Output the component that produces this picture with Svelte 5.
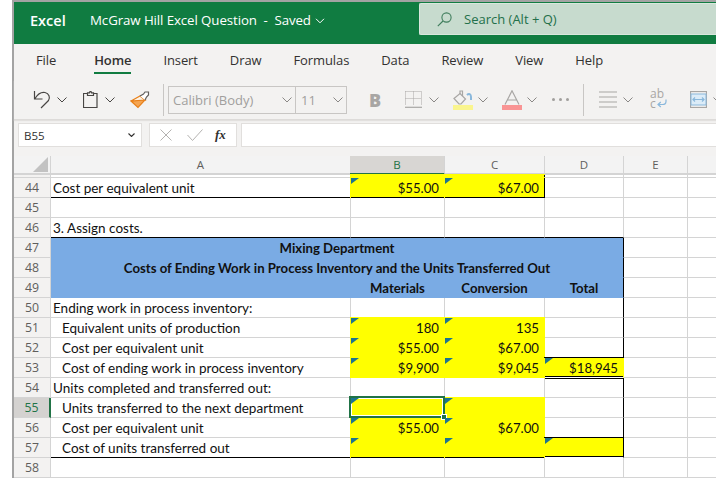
<script>
  const rows = [
    { n: 44, cls: 'line', a: 'Cost per equivalent unit', b: '$55.00', c: '$67.00', by: 1, cy: 1, cbox: 1 },
    { n: 45 },
    { n: 46, a: '3. Assign costs.', cls: 'line', dline: 1 },
    { n: 47, merged: 'Mixing Department' },
    { n: 48, merged: 'Costs of Ending Work in Process Inventory and the Units Transferred Out' },
    { n: 49, blue: 1, b: 'Materials', c: 'Conversion', d: 'Total' },
    { n: 50, a: 'Ending work in process inventory:', dr: 1 },
    { n: 51, a: 'Equivalent units of production', ind: 1, b: '180', c: '135', by: 1, cy: 1, dr: 1 },
    { n: 52, a: 'Cost per equivalent unit', ind: 1, b: '$55.00', c: '$67.00', by: 1, cy: 1, dr: 1, dline: 1 },
    { n: 53, a: 'Cost of ending work in process inventory', ind: 1, b: '$9,900', c: '$9,045', by: 1, cy: 1, d: '$18,945', dy: 1 },
    { n: 54, a: 'Units completed and transferred out:', dr: 1, dtop: 1 },
    { n: 55, a: 'Units transferred to the next department', ind: 1, by: 1, cy: 1, dr: 1, sel: 1 },
    { n: 56, a: 'Cost per equivalent unit', ind: 1, b: '$55.00', c: '$67.00', by: 1, cy: 1, dr: 1, dline: 1 },
    { n: 57, a: 'Cost of units transferred out', ind: 1, by: 1, cy: 1, cls: 'line', dy: 1, dbox: 1 },
    { n: 58 }
  ];
  const tabs = ['File', 'Home', 'Insert', 'Draw', 'Formulas', 'Data', 'Review', 'View', 'Help'];
</script>

{#snippet chev(cls)}
  <svg class="chev {cls}" viewBox="0 0 10 6"><path d="M.5.5 5 5 9.5.5" /></svg>
{/snippet}

<div class="page">
  <div class="frame">
    <header class="title">
      <b class="brand">Excel</b>
      <span class="doc">McGraw Hill Excel Question&nbsp; - &nbsp;Saved</span>
      <svg class="title-chev" viewBox="0 0 10 6"><path d="M1 .8 5 4.8 9 .8" /></svg>
      <div class="search">
        <svg class="glass" viewBox="0 0 15 15"><circle cx="9.5" cy="5.5" r="4.6" /><path d="M6 9 .8 14.2" /></svg>
        <span>Search (Alt + Q)</span>
      </div>
    </header>

    <nav class="tabs">
      {#each tabs as t}
        <span class="tab" class:on={t === 'Home'}>{t}</span>
      {/each}
    </nav>

    <div class="tools">
      <svg class="undo" viewBox="0 0 18 19"><path class="dk" d="M1.5 1v8h8M2 8.500C4.500 4.500 8 1.700 12 2.500c4 .8 5.500 5 3.500 8L8 18" /></svg>
      {@render chev('c1')}
      <svg class="clip" viewBox="0 0 15 17"><path class="dk" d="M4 2.500H.5v14h13.500v-14H10.500M4.500 4.500V1.800H6.500L7 .5h1l.5 1.300h2v2.700z" /></svg>
      {@render chev('c2')}
      <svg class="paint" viewBox="0 0 20 18">
        <path class="wedge" d="M1 10 15 9 8 16.500z" />
        <path class="head" d="M1 10 10 5 15 9z" />
        <path class="handle" d="M10 5 13.500 3 15 1 18.500 1 18.500 4 16.500 6 15 9" />
      </svg>
      <i class="sep s1"></i>
      <div class="box font"><span>Calibri (Body)</span>{@render chev('inbox')}</div>
      <div class="box size"><span>11</span>{@render chev('inbox')}</div>
      <b class="bold">B</b>
      <svg class="borders" viewBox="0 0 17 17"><path class="dots" d="M.5.500H16.500V14M.5.500V14M8.500.500V14M.5 7.500H16.500" /><path class="lt" d="M0 16.300H17" /></svg>
      {@render chev('c3')}
      <div class="color fill">
        <svg viewBox="0 0 20 15"><path class="lt" d="M1 8.500 7 3.500 12.500 9 8 14H6z" /><path class="lt" d="M7 4V1h2.500v5" /><path class="blueline thick" d="M14 5c2-2 4-1 4 2v3" /></svg>
        <i class="bar yl"></i>
      </div>
      {@render chev('c4')}
      <div class="color txt">
        <svg viewBox="0 0 20 15"><path class="lt" d="M3 14.500 10 .8 17 14.500M5.500 10H14.500" /></svg>
        <i class="bar rd"></i>
      </div>
      {@render chev('c4')}
      <span class="dots3"><i></i><i></i><i></i></span>
      <i class="sep s2"></i>
      <svg class="align" viewBox="0 0 18 17"><path class="lt" d="M0 1H18M0 6H18M0 11H18M0 16H18" /></svg>
      {@render chev('c5')}
      <div class="wrap">
        <span class="ab">ab</span><span class="cc">c</span>
        <svg viewBox="0 0 10 9"><path class="blueline" d="M9 .5V2.500C9 5 7.500 5.500 5.500 5.500H1.500M3.800 3 1 5.500 3.800 8" /></svg>
      </div>
      <svg class="merge" viewBox="0 0 17 17">
        <rect x=".5" y=".5" width="16" height="16" class="lt" />
        <rect class="mfill" x="1" y="3" width="15" height="11" />
        <path class="blueline" d="M3 8.500H14M5 6.500 3 8.500 5 10.500M12 6.500 14 8.500 12 10.500" />
      </svg>
      {@render chev('c6')}
    </div>

    <div class="formula">
      <div class="namebox"><span>B55</span><svg class="mini" viewBox="0 0 7 4"><path d="M.5.500 3.500 3.500 6.500.500" /></svg></div>
      <div class="fxbox">
        <svg class="x" viewBox="0 0 12 12"><path d="M.5.500 11.500 11.500M11.500.500.500 11.500" /></svg>
        <svg class="v" viewBox="0 0 16 12"><path d="M.5 6 5.500 11.500 15.500.500" /></svg>
        <i class="fx">fx</i>
      </div>
      <div class="input"></div>
    </div>

    <div class="sheet">
      <div class="row head">
        <div class="corner"><i></i></div>
        <div class="col">A</div>
        <div class="col colsel">B</div>
        <div class="col">C</div>
        <div class="col">D</div>
        <div class="col">E</div>
        <div class="col last"></div>
      </div>
      <div class="row partial">
        <div class="rh"></div>
        <div class="c"></div>
        <div class="c y"></div>
        <div class="c y cbox"></div>
        <div class="c"></div>
        <div class="c"></div>
        <div class="c last"></div>
      </div>
      {#each rows as r}
        <div class="row">
          <div class="rh" class:rsel={r.sel}>{r.n}</div>
          {#if r.merged}
            <div class="c blue span">{r.merged}</div>
          {:else if r.blue}
            <div class="c blue"></div>
            <div class="c blue ctr">{r.b}</div>
            <div class="c blue ctr">{r.c}</div>
            <div class="c blue ctr edge">{r.d}</div>
          {:else}
            <div class="c txt-a" class:ind={r.ind} class:bl={r.cls === 'line'}>{r.a ?? ''}</div>
            <div class="c num" class:y={r.by} class:bl={r.cls === 'line'}>
              {#if r.by}<i class="mark"></i>{/if}{r.b ?? ''}
              {#if r.sel}<i class="cursor"><i class="grip"></i></i>{/if}
            </div>
            <div class="c num" class:y={r.cy} class:bl={r.cls === 'line'} class:cbox={r.cbox}>
              {#if r.cy}<i class="mark"></i>{/if}{r.c ?? ''}
            </div>
            <div class="c num" class:y={r.dy} class:dr={r.dr} class:bl={r.dline} class:dbl={r.dy} class:dtop={r.dtop} class:edge={r.dbox}>
              {#if r.dy}<i class="mark"></i>{/if}{r.d ?? ''}
            </div>
          {/if}
          <div class="c"></div>
          <div class="c last"></div>
        </div>
      {/each}
    </div>
  </div>
</div>

<style>
  :global(body) { margin: 0; background: #fff; }
  .page { width: 716px; height: 478px; overflow: hidden; padding-left: 12px; box-sizing: border-box; background: #fff; }
  .frame { height: 478px; border-left: 2px solid #a3a3a3; border-top: 2px solid #a3a3a3; box-sizing: border-box; background: #f3f2f1; display: flex; flex-direction: column; font-family: "Open Sans", sans-serif; }

  .title { height: 42px; flex: none; background: #107c41; color: #fff; display: flex; align-items: center; }
  .brand { font-size: 14.500px; font-weight: 600; margin-left: 16px; width: 60px; position: relative; top: -3px; }
  .doc { font-size: 13.300px; position: relative; top: -3px; white-space: nowrap; letter-spacing: -.1px; }
  .title-chev { width: 10px; height: 6px; margin-left: 4px; position: relative; top: -2px; }
  .title-chev path { fill: none; stroke: #fff; stroke-width: 1; }
  .search { margin-left: auto; width: 297px; height: 32px; margin-bottom: 8px; box-sizing: border-box; background: #c7dbce; border: 1px solid #d9e7dd; border-right: 0; border-radius: 2px 0 0 2px; display: flex; align-items: center; color: #23704a; font-size: 13px; }
  .glass { width: 15px; height: 15px; margin-left: 17px; margin-right: 12px; }
  .glass circle, .glass path { fill: none; stroke: #3f7d5c; stroke-width: 1.100; }

  .tabs { height: 36px; flex: none; display: flex; gap: 32px; padding-left: 22px; padding-bottom: 4px; box-sizing: border-box; align-items: center; font-size: 13px; color: #323130; letter-spacing: -.1px; }
  .tab { position: relative; line-height: 20px; }
  .tab:first-child { margin-right: 6px; }
  .tab.on { font-weight: 600; }
  .tab.on::after { content: ""; position: absolute; left: 0; right: 0; bottom: -4px; height: 2.500px; background: #107c41; }

  .tools { height: 40px; flex: none; box-sizing: border-box; border-bottom: 1px solid #dddbd9; box-shadow: 0 1px 1px #e2e0de; display: flex; align-items: center; }
  .dk { stroke: #484644; stroke-width: 1.200; fill: none; }
  .lt { stroke: #a8a6a4; stroke-width: 1.200; fill: none; }
  .dots { stroke: #a8a6a4; stroke-width: 1; stroke-dasharray: 1 1; fill: none; }
  .blueline { stroke: #8ab8dc; stroke-width: 1.200; fill: none; }
  .thick { stroke-width: 2; }
  .mfill { fill: #dcecf8; stroke: #8ab8dc; }
  .wedge { fill: #f5a552; stroke: #e8801a; stroke-width: 1.200; }
  .head { fill: #fdf3e6; stroke: #e8801a; stroke-width: 1.200; }
  .handle { fill: #fff; stroke: #605e5c; stroke-width: 1.200; }
  .chev { width: 10px; height: 6px; flex: none; margin-left: 6px; }
  .chev path { stroke: #8a8886; stroke-width: 1; fill: none; }
  .c1 path, .c2 path { stroke: #484644; }
  .undo { width: 18px; height: 19px; margin-left: 19px; flex: none; }
  .clip { width: 15px; height: 17px; margin-left: 16px; flex: none; }
  .c2 { margin-left: 7px; }
  .paint { width: 20px; height: 18px; margin-left: 15px; flex: none; }
  .sep { width: 1px; height: 32px; background: #c8c6c4; flex: none; }
  .s1 { margin-left: 13px; }
  .box { height: 28px; box-sizing: border-box; border: 1px solid #c8c6c4; display: flex; align-items: center; justify-content: space-between; color: #a19f9d; font-size: 13px; flex: none; }
  .font { width: 128px; margin-left: 4px; padding-left: 4px; }
  .size { width: 52px; margin-left: -1px; padding-left: 5px; }
  .chev.inbox { margin-right: 3px; }
  .bold { font-size: 18px; color: #a8a6a4; margin-left: 22px; width: 12px; font-weight: 800; flex: none; }
  .borders { width: 17px; height: 17px; margin-left: 24px; flex: none; }
  .c3 { margin-left: 7px; }
  .color { width: 20px; flex: none; margin-left: 14px; display: flex; flex-direction: column; align-items: center; }
  .color svg { width: 20px; height: 15px; }
  .bar { width: 20px; height: 5px; display: block; }
  .yl { background: #faf58e; }
  .rd { background: #f99494; }
  .chev.c4 { margin-left: 5px; }
  .dots3 { display: flex; gap: 4px; margin-left: 15px; flex: none; }
  .dots3 i { width: 3px; height: 3px; border-radius: 50%; background: #a19f9d; }
  .s2 { margin-left: 14px; }
  .align { width: 18px; height: 17px; margin-left: 15px; flex: none; }
  .wrap { position: relative; width: 18px; height: 19px; margin-left: 17px; flex: none; color: #a8a6a4; font-size: 12px; line-height: 10px; }
  .ab { position: absolute; left: 0; top: -1px; }
  .cc { position: absolute; left: 0; top: 9px; }
  .wrap svg { position: absolute; left: 7px; top: 9px; width: 10px; height: 9px; }
  .merge { width: 17px; height: 17px; margin-left: 22px; flex: none; }

  .formula { height: 28px; flex: none; display: flex; margin-top: 3px; }
  .namebox { width: 124px; height: 24px; margin-left: 4px; box-sizing: border-box; background: #fff; border: 1px solid #e1dfdd; display: flex; align-items: center; justify-content: space-between; padding: 0 6px 0 5px; font-size: 11.500px; color: #323130; flex: none; }
  .mini { width: 7px; height: 4px; }
  .mini path { fill: none; stroke: #323130; stroke-width: 1.100; }
  .fxbox { width: 88px; height: 24px; margin-left: 7px; box-sizing: border-box; background: #fff; border: 1px solid #e1dfdd; display: flex; align-items: center; padding-left: 10px; flex: none; }
  .x { width: 12px; height: 12px; }
  .v { width: 16px; height: 12px; margin-left: 15px; }
  .x path, .v path { fill: none; stroke: #b4b2b0; stroke-width: 1; }
  .fx { font-family: "Liberation Serif", serif; font-size: 13px; margin-left: 12px; color: #323130; font-weight: 700; }
  .input { flex: 1; height: 24px; margin-left: 4px; box-sizing: border-box; background: #fff; border: 1px solid #e1dfdd; border-right: 0; }

  .sheet { flex: 1; margin-top: 5px; background: #fff; font-family: Lato, sans-serif; font-size: 13.200px; color: #111; }
  .row { display: grid; grid-template-columns: 37px 300px 94px 100px 79px 64px 1fr; height: 20px; }
  .head { height: 19px; background: #f3f3f3; }
  .partial { height: 3px; }
  .corner { border-right: 1px solid #d4d4d4; border-bottom: 2px solid #d4d4d4; position: relative; }
  .corner i { position: absolute; right: 2px; bottom: 1px; width: 15px; height: 15px; background: #c2c2c2; clip-path: polygon(100% 0, 100% 100%, 0 100%); }
  .col { border-right: 1px solid #d4d4d4; border-bottom: 2px solid #d4d4d4; display: flex; align-items: center; justify-content: center; font-family: "Open Sans", sans-serif; font-size: 11.500px; color: #605e5c; }
  .col.last { border-right: 0; }
  .colsel { background: #d8d6d3; color: #217346; border-bottom-color: #217346; margin-left: -1px; }
  .rh { background: #f3f2f1; border-right: 1px solid #d4d4d4; border-bottom: 1px solid #d4d4d4; box-sizing: border-box; display: flex; align-items: center; justify-content: center; font-family: "Open Sans", sans-serif; font-size: 12.300px; color: #605e5c; }
  .rsel { background: #d4d2d0; color: #217346; border-right: 2px solid #217346; }
  .c { box-sizing: border-box; border-right: 1px solid #d4d4d4; border-bottom: 1px solid #d4d4d4; display: flex; align-items: center; white-space: nowrap; position: relative; min-width: 0; }
  .last { border-right: 0; }
  .txt-a { padding-left: 2px; font-size: 13.500px; }
  .ind { padding-left: 11px; }
  .num { justify-content: flex-end; padding-right: 5px; padding-top: 1px; }
  .y { background: #ff0; border-right-color: #ff0; border-bottom-color: #ff0; box-shadow: -1px 0 #ff0, 0 -1px #ff0, -1px -1px #ff0; }
  .bl { border-bottom-color: #000; }
  .cbox { border-right-color: #000; }
  .dr { border-right-color: #000; }
  .blue { background: #7aabe4; border-right-color: #7aabe4; border-bottom-color: #7aabe4; font-weight: 700; }
  .span { grid-column: span 4; justify-content: center; border-right-color: #000; }
  .ctr { justify-content: center; }
  .edge { border-right-color: #000; }
  .dbl { border-bottom: 1px solid #fff; box-shadow: -1px 0 #ff0, 0 -1px #000, -1px -1px #000, inset 0 -1px #000; }
  .dtop { box-shadow: inset 0 1px #000; }
  .mark { position: absolute; left: 0; top: 0; width: 8px; height: 6px; background: #1c7490; clip-path: polygon(0 0, 100% 0, 0 100%); z-index: 3; }
  .cursor { position: absolute; left: -2px; top: -2px; right: -1px; bottom: -1px; border: 2px solid #217346; box-shadow: inset 0 0 0 1px #fff; z-index: 2; }
  .grip { position: absolute; right: -4px; bottom: -4px; width: 4px; height: 4px; background: #217346; border: 1px solid #fff; }
</style>
